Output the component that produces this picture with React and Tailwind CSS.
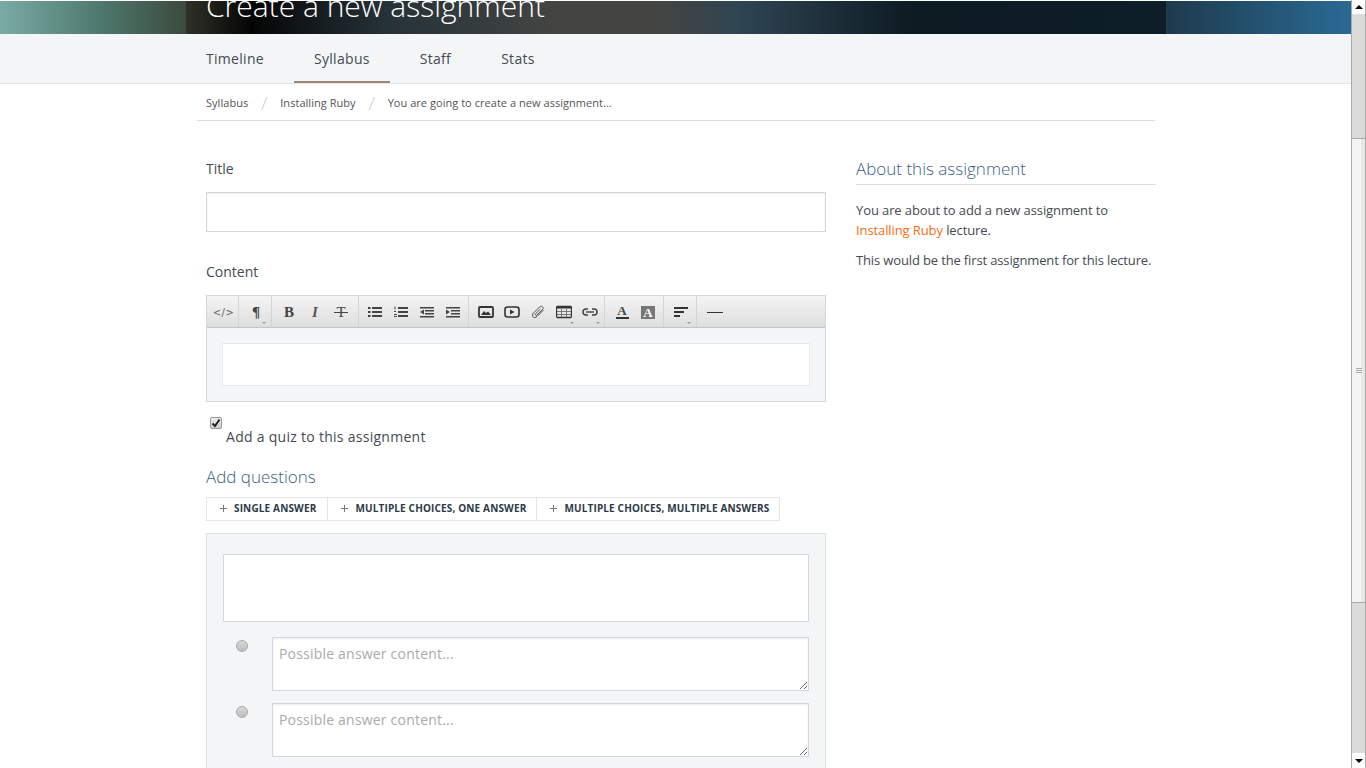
import React from 'react';

const font = { fontFamily: '"Open Sans", sans-serif' };
const serif = { fontFamily: '"Liberation Serif", serif' };

// toolbar drawings, all in a 16x16 box
const Icon = ({ children }) => (
  <svg width="16" height="16" viewBox="0 0 16 16">{children}</svg>
);

const Caret = () => <span className="absolute right-[3px] bottom-[3px] w-0 h-0 border-x-[2px] border-t-[2px] border-x-transparent border-t-[#999]" />;

const Btn = ({ children, caret }) => (
  <span className="relative w-[26px] h-[31px] pt-px flex items-center justify-center shrink-0">
    {children}
    {caret && <Caret />}
  </span>
);

const Lines = ({ prefix }) => (
  <g fill="#444">
    <rect x="5" y="3" width="10" height="2" />
    <rect x="5" y="7" width="10" height="2" />
    <rect x="5" y="11" width="10" height="2" />
    {prefix}
  </g>
);

const Toolbar = () => (
  <div className="h-[32px] flex border-b border-[#c4c4c4] bg-[linear-gradient(#f4f4f4,#dedede)]">
    <div className="w-[32px] flex items-center justify-center pl-[2px] pt-px border-r border-[#d4d4d4]">
      <span className="text-[10px] tracking-[0.5px] text-[#666]" style={{ fontFamily: '"DejaVu Sans", sans-serif' }}>&lt;/&gt;</span>
    </div>
    <div className="w-[33px] flex pl-[4px] border-r border-[#d4d4d4]">
      <Btn caret><span className="text-[15px] font-bold text-[#444]" style={serif}>¶</span></Btn>
    </div>
    <div className="flex px-1 border-r border-[#d4d4d4]">
      <Btn><span className="text-[15px] font-bold text-[#444]" style={serif}>B</span></Btn>
      <Btn><span className="text-[15px] italic font-bold text-[#555]" style={serif}>I</span></Btn>
      <Btn>
        <span className="relative text-[15px] text-[#444] leading-none" style={serif}>
          T
          <span className="absolute left-[-2px] right-[-2px] top-[7px] h-px bg-[#444]" />
        </span>
      </Btn>
    </div>
    <div className="flex pl-[3px] pr-[2px] border-r border-[#d4d4d4]">
      <Btn>
        <Icon>
          <Lines prefix={<><rect x="1" y="3" width="2.5" height="2" /><rect x="1" y="7" width="2.5" height="2" /><rect x="1" y="11" width="2.5" height="2" /></>} />
        </Icon>
      </Btn>
      <Btn>
        <Icon>
          <Lines prefix={<><rect x="1.5" y="2.5" width="1" height="3" /><rect x="1" y="10" width="3" height="1" /><rect x="1" y="12" width="3" height="1" /><rect x="1" y="7" width="2" height="1" /></>} />
        </Icon>
      </Btn>
      <Btn>
        <Icon>
          <g fill="#444">
            <rect x="1" y="3" width="14" height="1.5" />
            <rect x="6" y="6" width="9" height="1.5" />
            <rect x="6" y="9" width="9" height="1.5" />
            <rect x="1" y="12" width="14" height="1.5" />
            <path d="M5 5.5v5L1 8z" />
          </g>
        </Icon>
      </Btn>
      <Btn>
        <Icon>
          <g fill="#444">
            <rect x="1" y="3" width="14" height="1.5" />
            <rect x="6" y="6" width="9" height="1.5" />
            <rect x="6" y="9" width="9" height="1.5" />
            <rect x="1" y="12" width="14" height="1.5" />
            <path d="M1 5.5v5L5 8z" />
          </g>
        </Icon>
      </Btn>
    </div>
    <div className="flex pl-1 pr-px border-r border-[#d4d4d4]">
      <Btn>
        <Icon>
          <rect x="1" y="3" width="14" height="10" rx="1" fill="none" stroke="#333" strokeWidth="1.8" />
          <path d="M3 11l3-4 2 2 2-1.5 3 3.5z" fill="#333" />
        </Icon>
      </Btn>
      <Btn>
        <Icon>
          <rect x="1" y="3" width="14" height="10" rx="2.5" fill="none" stroke="#333" strokeWidth="1.6" />
          <path d="M6 5.5v5L10.5 8z" fill="#333" />
        </Icon>
      </Btn>
      <Btn>
        <Icon>
          <path d="M13.5 6L7 12.5c-1.3 1.3-3.2 1.3-4 .5s-.8-2.7.5-4l6-6c1-1 2.2-1 3-.2s.8 2-.2 3L7 11c-.5.5-1.1.5-1.5.1s-.4-1 .1-1.5L10.5 5" fill="none" stroke="#555" strokeWidth="1" />
        </Icon>
      </Btn>
      <Btn caret>
        <Icon>
          <rect x="0.5" y="2.5" width="15" height="11" rx="1" fill="none" stroke="#333" strokeWidth="1.3" />
          <rect x="1" y="3" width="14" height="1.5" fill="#333" />
          <path d="M1 7.5h14M1 10.5h14M5.5 5v8M10.5 5v8" stroke="#777" strokeWidth="1" />
        </Icon>
      </Btn>
      <Btn caret>
        <Icon>
          <path d="M6 5H4a3 3 0 0 0 0 6h2M10 5h2a3 3 0 0 1 0 6h-2" fill="none" stroke="#444" strokeWidth="1.5" />
          <rect x="4" y="7.3" width="8" height="1.4" fill="#444" />
        </Icon>
      </Btn>
    </div>
    <div className="flex pl-1 pr-[2px] border-r border-[#d4d4d4]">
      <Btn>
        <span className="flex flex-col items-center">
          <span className="text-[13px] font-bold leading-[12px] text-[#444]" style={serif}>A</span>
          <span className="w-[13px] h-[2px] bg-[#333]" />
        </span>
      </Btn>
      <Btn>
        <span className="w-[14px] h-[13px] bg-[#777] flex items-center justify-center text-[13px] font-bold leading-none text-white" style={serif}>A</span>
      </Btn>
    </div>
    <div className="flex pl-1 pr-[2px] border-r border-[#d4d4d4]">
      <Btn caret>
        <Icon>
          <g fill="#333">
            <rect x="1" y="3" width="14" height="2" />
            <rect x="1" y="7" width="10" height="2" />
            <rect x="1" y="11" width="6" height="2" />
          </g>
        </Icon>
      </Btn>
    </div>
    <div className="flex pl-[5px]">
      <Btn><span className="w-4 h-px bg-[#333]" /></Btn>
    </div>
  </div>
);

const Answer = () => (
  <div className="flex">
    <div className="w-[49px] pl-[13px] pt-[3px] shrink-0">
      <span className="block w-[12px] h-[12px] rounded-full border border-[#aaa] bg-[linear-gradient(#d8d8d8,#bdbdbd)]" />
    </div>
    <textarea
      placeholder="Possible answer content..."
      className="block w-[537px] h-[54px] border border-[#d3d8dc] bg-white px-[6px] pt-[6px] text-[14px] tracking-[0.2px] leading-5 outline-none placeholder:text-[#aaa] shadow-[inset_0_1px_2px_rgba(0,0,0,0.08)]"
      style={font}
    />
  </div>
);

const AddButton = ({ label, className }) => (
  <span className={`h-full flex items-center pl-[13px] pb-[2px] ${className}`}>
    <svg width="7" height="7" viewBox="0 0 7 7" className="mr-[7px] mt-px"><path d="M3.5 0v7M0 3.5h7" stroke="#777" strokeWidth="1" /></svg>
    {label}
  </span>
);

export default function App() {
  return (
    <div className="flex h-screen overflow-hidden bg-white text-[#444b52]" style={font}>
      <div className="flex-1 min-w-0 overflow-hidden">
        {/* banner, title is cut by the scrolled page */}
        <div className="h-[33px] mt-px bg-[linear-gradient(90deg,#7aaba5_0,#4f7a70_96px,#3c4a3c_186px,#1e3a4c_1166px,#2a6a95_1351px)] overflow-hidden">
          <div className="w-[980px] h-full ml-[186px] pl-5 overflow-hidden bg-[linear-gradient(90deg,#2e3028_0,#050505_66px,#253238_200px,#444542_374px,#444542_474px,#2f4452_554px,#0c1a22_729px,#0e1e28_980px)]">
            <h1 className="text-[30px] font-light leading-[40px] -mt-[15px] text-white">Create a new assignment</h1>
          </div>
        </div>

        <nav className="h-[50px] bg-[#f3f5f7] border-b border-[#e3e5e7] pl-[186px] flex gap-[10px] text-[14px] tracking-[0.3px] text-[#444b52]">
          <a className="px-5 pt-[14px] h-[49px]">Timeline</a>
          <a className="px-5 pt-[14px] h-[49px] border-b-2 border-[#9b8a7a]">Syllabus</a>
          <a className="px-5 pt-[14px] h-[49px]">Staff</a>
          <a className="px-5 pt-[14px] h-[49px]">Stats</a>
        </nav>

        <div className="ml-[197px] w-[958px] h-[37px] border-b border-[#ddd] pl-[9px] pt-[2px] flex items-center text-[11px] tracking-[0.04px] text-[#555]">
          <span>Syllabus</span>
          <span className="w-[32px] text-center text-[19px] leading-none font-light text-[#ccc]">/</span>
          <span>Installing Ruby</span>
          <span className="w-[32px] text-center text-[19px] leading-none font-light text-[#ccc]">/</span>
          <span>You are going to create a new assignment...</span>
        </div>

        <div className="flex pl-[206px] pt-[38px]">
          <div className="w-[620px] shrink-0">
            <label className="block text-[14px] leading-5">Title</label>
            <input className="block w-full h-[40px] mt-[13px] border border-[#d3d8dc] bg-white outline-none shadow-[inset_0_1px_2px_rgba(0,0,0,0.08)]" />

            <label className="block text-[14px] leading-5 mt-[30px]">Content</label>
            <div className="mt-[13px] border border-[#d3d8dc] bg-[#f3f5f7] h-[107px]">
              <Toolbar />
              <div className="mx-[15px] mt-[15px] h-[43px] bg-white border border-[#e6e8ea]" />
            </div>

            <div className="pl-1 pt-[15px] h-[47px]">
              <span className="flex items-center justify-center w-[12px] h-[12px] rounded-[2px] border border-[#999] bg-[linear-gradient(#eee,#ccc)]">
                <svg width="10" height="10" viewBox="0 0 10 10"><path d="M1.5 5.5L4 8l4.5-6.5" fill="none" stroke="#222" strokeWidth="2" /></svg>
              </span>
              <label className="block pl-4 text-[14px] tracking-[0.28px] leading-5 -mt-[2px]">Add a quiz to this assignment</label>
            </div>

            <h3 className="text-[17px] font-light leading-6 text-[#3a5f85] mt-[16px]">Add questions</h3>

            <div className="mt-[8px] inline-flex h-[24px] border border-[#e3e6e8] text-[10px] tracking-[0.15px] font-bold text-[#2b3a46] items-center align-top">
              <AddButton label="SINGLE ANSWER" className="pr-[11px] border-r border-[#e3e6e8]" />
              <AddButton label="MULTIPLE CHOICES, ONE ANSWER" className="pr-[10px] border-r border-[#e3e6e8]" />
              <AddButton label="MULTIPLE CHOICES, MULTIPLE ANSWERS" className="pr-[10px]" />
            </div>

            <div className="mt-[12px] border border-[#dfe2e5] bg-[#f3f5f7] pl-4 pr-4 pt-5 pb-10">
              <div className="h-[68px] bg-white border border-[#d3d8dc]" />
              <div className="mt-[15px] flex flex-col gap-3">
                <Answer />
                <Answer />
              </div>
            </div>
          </div>

          <aside className="w-[300px] ml-[30px] shrink-0">
            <h3 className="text-[17px] font-light leading-6 text-[#3a5f85] h-[28px] border-b border-[#ddd] -mt-[2px]">About this assignment</h3>
            <p className="mt-[15px] text-[13px] tracking-[-0.1px] leading-5">You are about to add a new assignment to <a className="text-[#f36f12]">Installing Ruby</a> lecture.</p>
            <p className="mt-[10px] text-[13px] tracking-[-0.14px] leading-5">This would be the first assignment for this lecture.</p>
          </aside>
        </div>
      </div>

      {/* browser scrollbar */}
      <div className="w-[15px] shrink-0 flex flex-col border-x border-[#aaa] bg-[#dcdbd9]">
        <div className="h-[14px] bg-white flex items-center justify-center">
          <span className="w-0 h-0 border-x-[4px] border-b-[4px] border-x-transparent border-b-black" />
        </div>
        <div className="h-[124px]" />
        <div className="h-[465px] border-y border-[#aaa] bg-[linear-gradient(90deg,#f5f4f2_70%,#e9e8e6_70%)] flex flex-col items-center justify-center gap-[1px]">
          <span className="w-[6px] h-px bg-[#aaa]" />
          <span className="w-[6px] h-px bg-[#aaa]" />
          <span className="w-[6px] h-px bg-[#aaa]" />
        </div>
        <div className="flex-1" />
        <div className="h-[15px] bg-white flex items-center justify-center">
          <span className="w-0 h-0 border-x-[4px] border-t-[4px] border-x-transparent border-t-black" />
        </div>
      </div>
    </div>
  );
}
